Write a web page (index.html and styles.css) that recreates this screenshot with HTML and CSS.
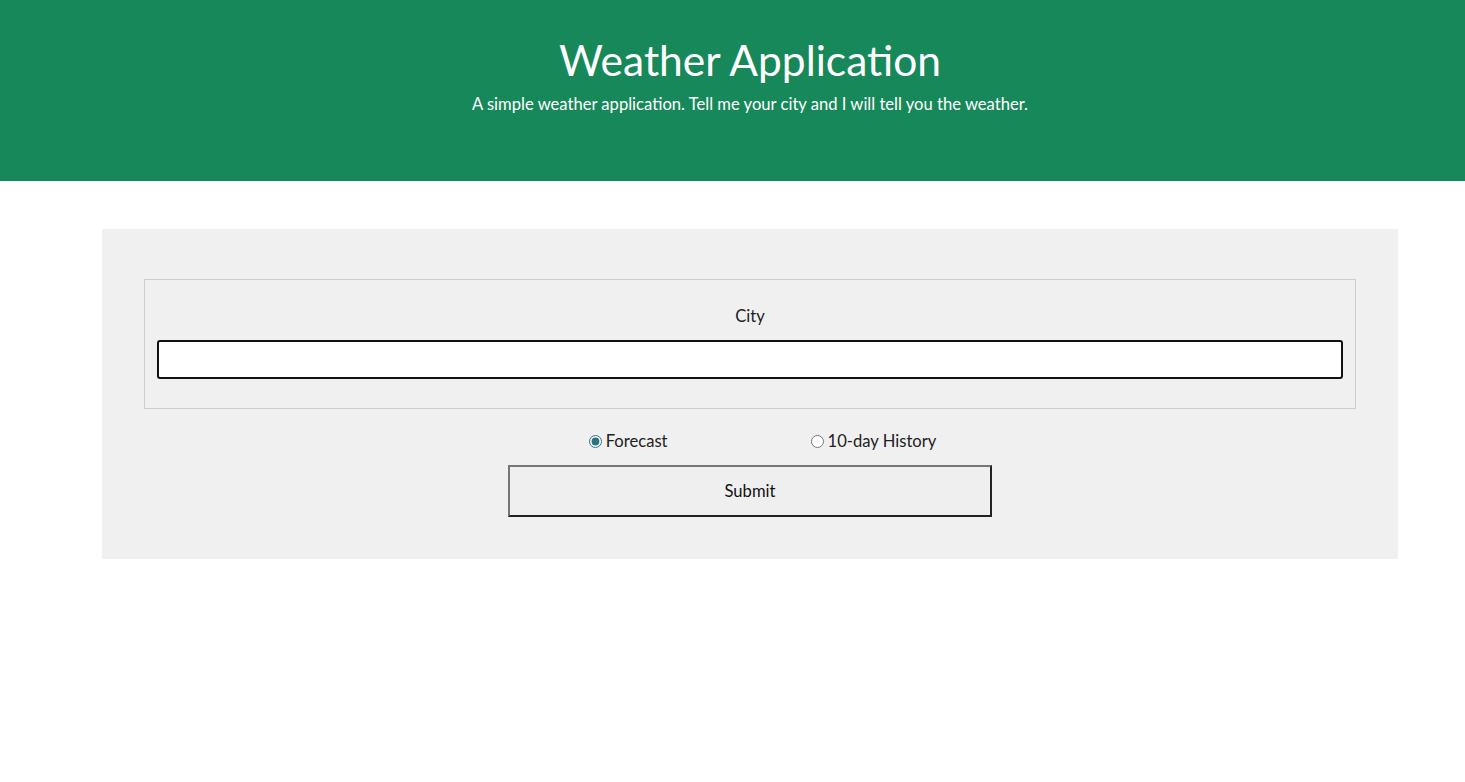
FILE: index.html
```html
<!DOCTYPE html>
<html lang="en">
<head>
<meta charset="utf-8">
<title>Weather Application</title>
<link rel="stylesheet" href="styles.css">
</head>
<body>
<div class="page">
  <header class="hero">
    <h1 class="hero-title">Weather Application</h1>
    <p class="hero-sub">A simple weather application. Tell me your city and I will tell you the weather.</p>
  </header>
  <main class="panel">
    <form class="weather-form">
      <fieldset class="city-set">
        <label class="city-label" for="city">City</label>
        <input class="city-input" id="city" type="text">
      </fieldset>
      <div class="modes">
        <label class="mode"><input type="radio" name="mode" checked> Forecast</label>
        <label class="mode"><input type="radio" name="mode"> 10-day History</label>
      </div>
      <button class="submit" type="button">Submit</button>
    </form>
  </main>
</div>
</body>
</html>
```
FILE: styles.css
```css
* { box-sizing: border-box; }
html, body { overflow-x: hidden; }
body {
  margin: 0;
  font-family: Lato, "Noto Sans", sans-serif;
  color: #222;
  background: #fff;
}
.page {
  width: 1500px;
}
.hero {
  background: #17885a;
  color: #fff;
  height: 181px;
  text-align: center;
  padding-top: 37px;
}
.hero-title {
  margin: 0;
  font-size: 42.5px;
  font-weight: 400;
  line-height: 46px;
}
.hero-sub {
  margin: 11px 0 0;
  font-size: 16.6px;
  line-height: 20px;
}
.panel {
  margin: 48px 102px 0;
  background: #f0f0f0;
  padding: 50px 42px 42px;
}
.weather-form {
  display: flex;
  flex-direction: column;
  align-items: center;
}
.city-set {
  width: 100%;
  margin: 0;
  border: 1px solid #cccccc;
  padding: 26px 12px 29px;
  display: flex;
  flex-direction: column;
  align-items: center;
}
.city-label {
  font-size: 16.6px;
  line-height: 20px;
  margin-bottom: 14px;
}
.city-input {
  width: 100%;
  height: 39px;
  border: 2px solid #111;
  border-radius: 3px;
  background: #fff;
  font: inherit;
}
.modes {
  display: flex;
  gap: 143px;
  margin-top: 22px;
  padding-left: 25px;
  height: 20px;
  align-items: center;
}
.mode {
  font-size: 16.6px;
  line-height: 20px;
  display: flex;
  align-items: center;
}
.mode input {
  margin: 0 4px 0 0;
  width: 13px;
  height: 13px;
  accent-color: #2d7182;
}
.submit {
  margin-top: 14px;
  width: 484px;
  height: 52px;
  background: #efefef;
  border: 2px solid;
  border-color: #767676 #222 #222 #767676;
  font: inherit;
  font-size: 16.6px;
  color: #111;
}
```
